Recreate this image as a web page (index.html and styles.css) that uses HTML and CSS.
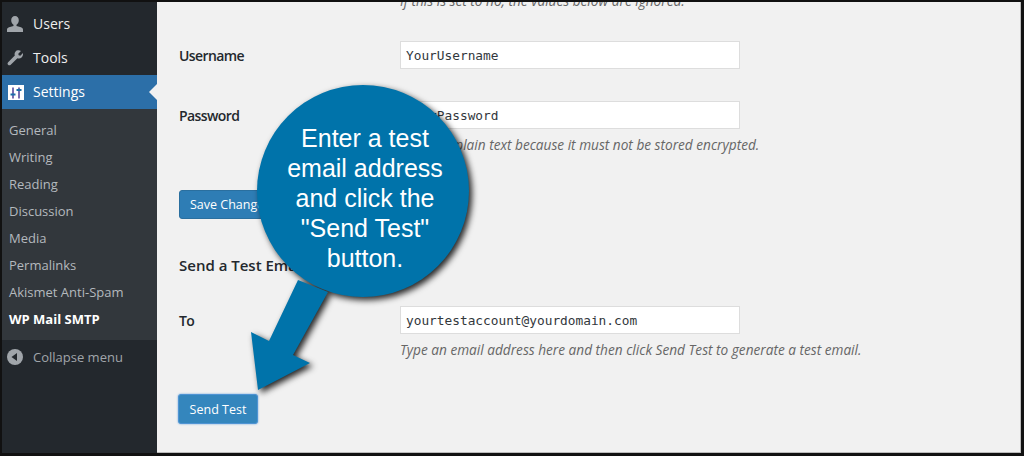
FILE: index.html
```html
<!DOCTYPE html>
<html lang="en">
<head>
    <meta charset="UTF-8">
    <title>WP Mail SMTP</title>
    <link rel="stylesheet" href="styles.css">
</head>
<body>

<div class="frame">
    <nav class="sidebar">
        <ul class="menu">
            <li class="menu-item">
                <svg class="menu-icon" viewBox="2 1.500 16 16"><path d="M10 1.500c2.300 0 3.800 1.900 3.800 4.300 0 2-1 3.700-2.300 4.500v1.300l4.500 1.200c1.200.4 2 1.300 2 2.400v2.300H2v-2.300c0-1.100.8-2 2-2.400l4.500-1.200v-1.300C7.200 9.500 6.200 7.800 6.200 5.800 6.200 3.400 7.700 1.500 10 1.500z"/></svg>
                <span>Users</span>
            </li>
            <li class="menu-item">
                <svg class="menu-icon" viewBox="1 1.500 18 18"><path d="M16.700 2.600l-3 3 .4 1.900 1.900.4 3-3c.3 2.100-.3 3.900-1.600 5-1.300 1.200-3 1.400-4.700.8l-7.500 7.400c-.9.900-2.200.9-3 .1-.8-.8-.8-2.100.1-3l7.500-7.400c-.6-1.700-.3-3.500.9-4.700 1.200-1.200 3.900-1.700 6-.5z"/></svg>
                <span>Tools</span>
            </li>
            <li class="menu-item is-current">
                <svg class="menu-icon settings-icon" viewBox="0 0 16 15">
                    <rect width="16" height="15" fill="#fff"/>
                    <path d="M5 2.500v11M11 2.500v11" stroke="#4b3f97" stroke-width="1.500" fill="none"/>
                    <path d="M2.500 9.500h5M8.500 5h5" stroke="#1b6fa8" stroke-width="2" fill="none"/>
                </svg>
                <span>Settings</span>
            </li>
        </ul>
        <ul class="submenu">
            <li>General</li>
            <li>Writing</li>
            <li>Reading</li>
            <li>Discussion</li>
            <li>Media</li>
            <li>Permalinks</li>
            <li>Akismet Anti-Spam</li>
            <li class="is-current">WP Mail SMTP</li>
        </ul>
        <div class="collapse">
            <svg class="menu-icon" viewBox="0 0 16 16"><circle cx="8" cy="8" r="8"/><path d="M10 4v8L4.500 8z" fill="#23282d"/></svg>
            <span>Collapse menu</span>
        </div>
    </nav>

    <main class="content">
        <p class="hint hint-top">If this is set to no, the values below are ignored.</p>

        <div class="row row-first">
            <label class="row-label">Username</label>
            <input class="text-input" type="text" value="YourUsername">
        </div>

        <div class="row row-next">
            <label class="row-label">Password</label>
            <input class="text-input" type="text" value="YourPassword">
        </div>
        <p class="hint">This is in plain text because it must not be stored encrypted.</p>

        <button class="btn btn-save">Save Changes</button>

        <h2 class="section-title">Send a Test Email</h2>

        <div class="row row-to">
            <label class="row-label">To</label>
            <input class="text-input" type="text" value="yourtestaccount@yourdomain.com">
        </div>
        <p class="hint">Type an email address here and then click Send Test to generate a test email.</p>

        <button class="btn btn-send">Send Test</button>
    </main>

    <div class="callout">
        <svg class="callout-shape" viewBox="0 0 224 320" width="224" height="320">
            <g class="callout-fill">
                <circle cx="107" cy="107" r="106"/>
                <path d="M42 196 13 257-5 248 2 306 54 279 37 271 72 208z"/>
            </g>
        </svg>
        <p class="callout-text">Enter a test email address and click the "Send Test" button.</p>
    </div>
</div>

</body>
</html>
```

FILE: styles.css
```css
* {
    box-sizing: border-box;
}
body {
    margin: 0;
    font-family: "Open Sans", sans-serif;
    color: #23282d;
}
ul {
    list-style: none;
    margin: 0;
    padding: 0;
}

/* outer frame */
.frame {
    position: relative;
    display: flex;
    width: 1024px;
    height: 456px;
    overflow: hidden;
    background-color: #f1f1f1;
    border: 2px solid #111;
    border-bottom-width: 3px;
    border-right-width: 3px;
}

/* sidebar */
.sidebar {
    flex: 0 0 155px;
    padding-top: 5px;
    background-color: #23282d;
}
.menu-item {
    position: relative;
    display: flex;
    align-items: center;
    gap: 10px;
    height: 34px;
    padding-left: 5px;
    font-size: 14px;
    color: #eee;
}
.menu-item span {
    margin-bottom: 2px;
}
.menu-icon {
    width: 16px;
    height: 16px;
    fill: #a0a5aa;
}
.settings-icon {
    height: 15px;
    margin-left: 1px;
    margin-right: -1px;
}
.menu-item.is-current {
    background-color: #2c6fa8;
    color: #fff;
}
.menu-item.is-current::after {
    content: "";
    position: absolute;
    right: 0;
    top: 9px;
    border: 8px solid transparent;
    border-right-color: #f1f1f1;
    border-left-width: 0;
}
.submenu {
    height: 231px;
    padding: 8px 0 0 7px;
    background-color: #32373c;
    font-size: 13px;
    color: #b4b9be;
}
.submenu li {
    height: 27px;
    line-height: 27px;
}
.submenu .is-current {
    color: #fff;
    font-weight: 700;
}
.collapse {
    display: flex;
    align-items: center;
    gap: 10px;
    height: 34px;
    padding-left: 5px;
    font-size: 13px;
    color: #a0a5aa;
}

/* main area */
.content {
    flex: 1;
    padding-left: 22px;
    border-right: 1px solid #bbb;
    border-bottom: 1px solid #bbb;
}
.hint {
    margin: 7px 0 0 221px;
    font-size: 13.65px;
    line-height: 18px;
    font-style: italic;
    color: #666;
    white-space: nowrap;
}
.hint-top {
    margin-top: -10px;
}
.row {
    display: flex;
    align-items: center;
}
.row-first {
    margin-top: 31px;
}
.row-next {
    margin-top: 32px;
}
.row-to {
    margin-top: 30px;
}
.row-label {
    flex: 0 0 221px;
    font-size: 14px;
    font-weight: 600;
    letter-spacing: -0.6px;
}
.text-input {
    width: 340px;
    height: 28px;
    padding: 1px 5px 0;
    background-color: #fff;
    border: 1px solid #ddd;
    font-family: "DejaVu Sans Mono", monospace;
    font-size: 12.8px;
    color: #32373c;
}
.section-title {
    margin: 35px 0 0;
    font-size: 15px;
    line-height: 22px;
    font-weight: 600;
}
.btn {
    display: block;
    height: 29px;
    padding: 0 10px;
    background-color: #2e7db5;
    border: 1px solid #2a6f9f;
    border-radius: 3px;
    font-family: "Open Sans", sans-serif;
    font-size: 12.5px;
    color: #fff;
}
.btn-save {
    margin-top: 36px;
}
.btn-send {
    margin-top: 35px;
    margin-left: -1px;
    width: 80px;
    height: 30px;
    padding: 0;
    background-color: #3486bd;
    border-color: #4f94d4;
    box-shadow: 0 0 2px #5b9dd9;
}

/* callout on top of the form */
.callout {
    position: absolute;
    left: 254px;
    top: 82px;
    width: 224px;
    height: 320px;
}
.callout-shape {
    display: block;
    overflow: visible;
}
.callout-fill {
    fill: #0073aa;
    filter: drop-shadow(3px 3px 3px rgba(0, 0, 0, 0.85));
}
.callout-text {
    position: absolute;
    left: 18px;
    top: 39px;
    width: 182px;
    margin: 0;
    font-family: "Liberation Sans", Arial, sans-serif;
    font-size: 25px;
    line-height: 30px;
    text-align: center;
    color: #fff;
}
```
